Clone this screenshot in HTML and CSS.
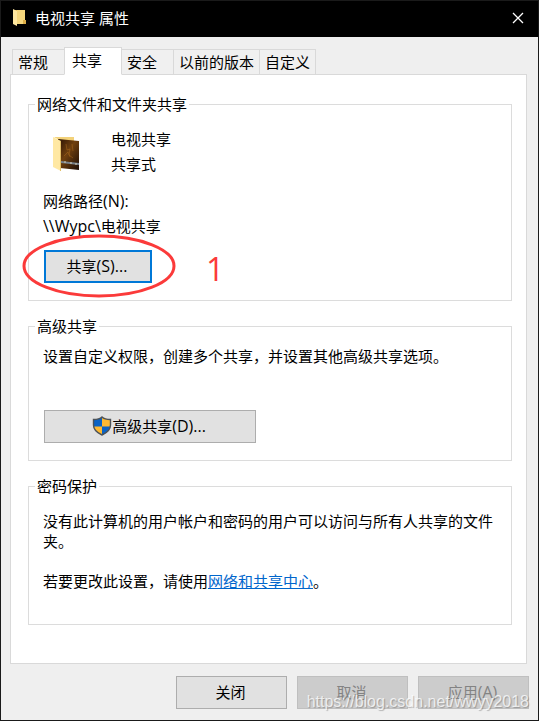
FILE: index.html
```html
<!DOCTYPE html>
<html lang="zh-CN">
<head>
  <meta charset="UTF-8" />
  <meta name="viewport" content="width=device-width, initial-scale=1.0"/>
  <title>电视共享 属性</title>
  <link rel="stylesheet" href="styles.css">
</head>
<body>
  <div class="window">
    <header class="title-bar">
      <svg class="title-icon" width="14" height="18" viewBox="0 0 14 18" aria-hidden="true">
        <path d="M1 1h11v14H1z" fill="#e9bd52"/>
        <path d="M4 1h8v14H4z" fill="#f6d77d"/>
        <path d="M0 0l4 2v15l-4-2z" fill="#ffe7a0"/>
        <path d="M10 11h3v4h-3z" fill="#dcae48"/>
      </svg>
      <h1 class="title-text">电视共享 属性</h1>
      <button class="close-btn" type="button" aria-label="关闭窗口">
        <svg width="12" height="12" viewBox="0 0 12 12" aria-hidden="true">
          <path d="M1 1l10 10M11 1L1 11" stroke="#fff" stroke-width="1.3" fill="none"/>
        </svg>
      </button>
    </header>

    <nav class="tabs" role="tablist">
      <button class="tab" type="button" role="tab">常规</button>
      <button class="tab active" type="button" role="tab" aria-selected="true">共享</button>
      <button class="tab" type="button" role="tab">安全</button>
      <button class="tab" type="button" role="tab">以前的版本</button>
      <button class="tab" type="button" role="tab">自定义</button>
    </nav>

    <main class="panel">
      <fieldset class="group">
        <legend>网络文件和文件夹共享</legend>
        <div class="share-info">
          <svg class="folder-icon" width="30" height="36" viewBox="0 0 30 36" aria-hidden="true">
            <defs>
              <linearGradient id="photo" x1="0" y1="0" x2="1" y2="1">
                <stop offset="0" stop-color="#2a1204"/>
                <stop offset="0.45" stop-color="#70400f"/>
                <stop offset="1" stop-color="#1c0d06"/>
              </linearGradient>
            </defs>
            <path d="M1 1h20v4H8z" fill="#f3d27a"/>
            <path d="M5 3l21 2v29L7 32z" fill="url(#photo)"/>
            <path d="M13 8l1 6 3-1-1 6 4 3M11 20l4-4 2 5M19 8l1 7" stroke="#a8671c" stroke-width="1" fill="none" opacity="0.5"/>
            <path d="M8 25l18 2v2L8 27z" fill="#77818c"/>
            <path d="M11 26h2M17 27h2M22 28h2" stroke="#d6cdb4" stroke-width="1"/>
            <path d="M0 1l8 4v30l-8-4z" fill="#ffe8a3"/>
            <path d="M7 5h1v30H7z" fill="#e3c069"/>
          </svg>
          <div class="share-name">
            <p>电视共享</p>
            <p>共享式</p>
          </div>
        </div>
        <div class="share-path">
          <p>网络路径<span class="latin">(N):</span></p>
          <p><span class="latin">\\Wypc\</span>电视共享</p>
        </div>
        <div class="share-action">
          <button class="btn btn-share" type="button"><span>共享<span class="latin">(S)...</span></span></button>
          <svg class="mark-ring" width="154" height="64" viewBox="0 0 154 64" aria-hidden="true">
            <ellipse cx="77" cy="32" rx="75" ry="30" fill="none" stroke="#fb3a3a" stroke-width="3"/>
          </svg>
          <span class="mark-number">1</span>
        </div>
      </fieldset>

      <fieldset class="group group-advanced">
        <legend>高级共享</legend>
        <p>设置自定义权限，创建多个共享，并设置其他高级共享选项。</p>
        <button class="btn btn-advanced" type="button">
          <svg width="20" height="20" viewBox="0 0 20 20" aria-hidden="true">
            <path d="M10 1C8 3 4 3.500 1.500 3.500V9c0 5 4 8 8.500 10z" fill="#0b63c4"/>
            <path d="M10 1c2 2 6 2.500 8.500 2.500V9c0 5-4 8-8.500 10z" fill="#fdb932"/>
            <path d="M10 10.500V19C6 17.200 2.600 14.600 1.700 10.500z" fill="#fdb932"/>
            <path d="M10 10.500V19c4-1.800 7.400-4.400 8.300-8.500z" fill="#0b63c4"/>
            <path d="M10 1C8 3 4 3.500 1.500 3.500V9c0 5 4 8 8.500 10 4.500-2 8.500-5 8.500-10V3.500C16 3.500 12 3 10 1z" fill="none" stroke="#4e5358" stroke-width="1.400"/>
          </svg>
          <span>高级共享<span class="latin">(D)...</span></span>
        </button>
      </fieldset>

      <fieldset class="group group-password">
        <legend>密码保护</legend>
        <p>没有此计算机的用户帐户和密码的用户可以访问与所有人共享的文件夹。</p>
        <p>若要更改此设置，请使用<a href="#">网络和共享中心</a>。</p>
      </fieldset>
    </main>

    <footer class="actions">
      <button class="btn" type="button">关闭</button>
      <button class="btn" type="button" disabled>取消</button>
      <button class="btn" type="button" disabled><span>应用<span class="latin">(A)</span></span></button>
      <span class="watermark">https://blog.csdn.net/wwyy2018</span>
    </footer>
  </div>
</body>
</html>
```
FILE: styles.css
```css
* { box-sizing: border-box; }

body {
  margin: 0;
  font-family: "Open Sans", "Noto Sans CJK SC", sans-serif;
  font-size: 15px;
  line-height: 20px;
  color: #000;
}

p { margin: 0; }
button { font: inherit; color: inherit; }
.latin { font-size: 16px; }

.window {
  display: flex;
  flex-direction: column;
  min-height: 100vh;
  background: #efefef;
  border: 1px solid #1a1a1a;
}

/* --- Title bar --- */
.title-bar {
  display: flex;
  align-items: center;
  height: 36px;
  padding: 0 14px 2px 12px;
  background: #000;
  color: #fff;
}
.title-text {
  flex: 1;
  margin: 0 0 0 8px;
  font-size: 15px;
  font-weight: normal;
}
.close-btn {
  display: flex;
  padding: 0;
  border: none;
  background: none;
  cursor: pointer;
}

/* --- Tabs --- */
.tabs {
  display: flex;
  align-items: flex-end;
  padding: 10px 11px 0;
}
.tab {
  min-width: 53px;
  height: 26px;
  margin-right: -1px;
  padding: 0 5px;
  border: 1px solid #d9d9d9;
  background: #f0f0f0;
  text-align: left;
  white-space: nowrap;
}
.tab.active {
  z-index: 1;
  min-width: 58px;
  height: 28px;
  padding: 0 7px 2px;
  border-bottom-color: #fff;
  background: #fff;
}

.panel {
  flex: 1;
  display: flex;
  flex-direction: column;
  gap: 15px;
  margin: -1px 11px 0 9px;
  padding: 19px 14px 38px 17px;
  border: 1px solid #d9d9d9;
  background: #fff;
}

/* --- Groups --- */
.group {
  min-width: 0;
  margin: 0;
  padding: 13px 12px 17px 14px;
  border: 1px solid #dcdcdc;
}
.group legend {
  margin-left: -8px;
  padding: 0 2px;
}
.share-info {
  display: flex;
  align-items: center;
}
.folder-icon { margin: 4px 28px 0 10px; }
.share-name, .share-path { line-height: 25px; }
.share-path { margin-top: 12px; }

.share-action {
  position: relative;
  display: flex;
  align-items: center;
  height: 33px;
  margin: 11px 0 0 1px;
}
.mark-ring {
  position: absolute;
  top: -16px;
  left: -22px;
  pointer-events: none;
}
.mark-number {
  margin-left: 54px;
  padding-top: 4px;
  font-size: 32px;
  color: #fb3a3a;
}

.group-advanced { padding-top: 10px; }
.group-password { padding: 15px 12px 33px 14px; }
.group-password p + p { margin-top: 20px; }
.group a { color: #0066cc; }

/* --- Buttons --- */
.btn {
  display: flex;
  align-items: center;
  justify-content: center;
  width: 111px;
  height: 33px;
  padding: 0 2px 2px 0;
  border: 1px solid #adadad;
  background: #e1e1e1;
}
.btn:disabled {
  border-color: #bfbfbf;
  background: #ccc;
  color: #838383;
}
.btn-share {
  width: 108px;
  border: 2px solid #0078d7;
}
.btn-advanced {
  width: 212px;
  margin: 44px 0 0 1px;
}

.actions {
  position: relative;
  display: flex;
  justify-content: flex-end;
  gap: 10px;
  padding: 12px 9px 11px;
}
.watermark {
  position: absolute;
  right: 9px;
  bottom: 8px;
  font-family: "Liberation Sans", Arial, sans-serif;
  font-size: 16px;
  color: rgba(255, 255, 255, 0.75);
  text-shadow: 1px 1px 1px rgba(0, 0, 0, 0.25);
  pointer-events: none;
}
```
